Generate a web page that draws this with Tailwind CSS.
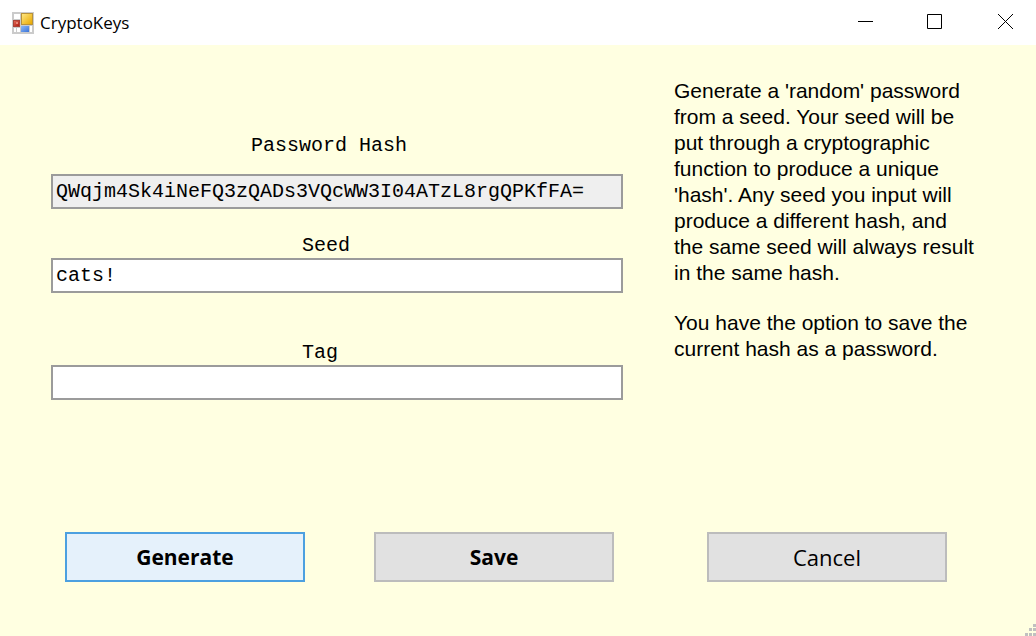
<!DOCTYPE html>
<html lang="en">
<head>
<meta charset="utf-8">
<meta name="viewport" content="width=device-width, initial-scale=1">
<title>CryptoKeys</title>
<script src="https://cdn.jsdelivr.net/npm/@tailwindcss/browser@4"></script>
</head>
<body class="relative flex min-h-screen flex-col bg-[#ffffe1] text-black">
  <header class="flex h-[45px] items-center bg-white pl-3">
    <svg class="size-[22px]" viewBox="0 0 22 22" aria-hidden="true">
      <defs>
        <linearGradient id="gold" x1="0" y1="0" x2="1" y2="1"><stop offset="0" stop-color="#ffe680"/><stop offset="1" stop-color="#e8a800"/></linearGradient>
        <linearGradient id="red" x1="0" y1="0" x2="1" y2="1"><stop offset="0" stop-color="#e06a58"/><stop offset="1" stop-color="#b01c10"/></linearGradient>
        <linearGradient id="blue" x1="0" y1="0" x2="1" y2="1"><stop offset="0" stop-color="#8ab8f8"/><stop offset="1" stop-color="#3c74d8"/></linearGradient>
      </defs>
      <rect width="22" height="22" fill="#cbcbcb"/>
      <path d="M2 2h6v5H2zM2 16h2v4H2zM5 16h3v4H5zM18 14h2v6h-2z" fill="#fff"/>
      <rect x="9" y="1" width="12" height="12" fill="#b8923a"/>
      <rect x="10" y="2" width="10" height="10" fill="url(#gold)"/>
      <rect x="1" y="8" width="7" height="7" fill="#a8443a"/>
      <rect x="2" y="9" width="5" height="5" fill="url(#red)"/>
      <rect x="4" y="10" width="2" height="2" fill="#e88878"/>
      <rect x="9" y="14" width="8" height="6" fill="url(#blue)"/>
    </svg>
    <h1 class="ml-[6px] flex-1 font-['Open_Sans','Noto_Sans',sans-serif] text-[17px] leading-6">CryptoKeys</h1>
    <div class="flex self-stretch pb-[2px]">
      <button type="button" aria-label="Minimize" class="grid w-[57px] place-items-center"><svg class="size-[15px]" viewBox="0 0 15 15" stroke="#000" fill="none"><path d="M0 7.500h15"/></svg></button>
      <button type="button" aria-label="Maximize" class="grid w-[81px] place-items-center"><svg class="size-[15px]" viewBox="0 0 15 15" stroke="#000" fill="none"><path d="M.5.5h14v14H.5z"/></svg></button>
      <button type="button" aria-label="Close" class="grid w-[61px] place-items-center"><svg class="size-[15px]" viewBox="0 0 15 15" stroke="#000" fill="none"><path d="M0 0l15 15M15 0L0 15"/></svg></button>
    </div>
  </header>

  <form class="flex flex-1 flex-col justify-between px-[51px] pb-[54px]">
    <div class="flex gap-[51px]">
      <div class="flex flex-1 flex-col pt-[89px] font-['Liberation_Mono',monospace] text-[20px] leading-6">
        <label for="hash" class="self-center pr-4">Password Hash</label>
        <input id="hash" type="text" readonly value="QWqjm4Sk4iNeFQ3zQADs3VQcWW3I04ATzL8rgQPKfFA=" class="mt-4 h-[35px] w-full border-2 border-[#9b9b9b] bg-[#efefef] px-[3px] outline-none">
        <label for="seed" class="mt-[25px] self-center pr-[22px]">Seed</label>
        <input id="seed" type="text" value="cats!" class="h-[35px] w-full border-2 border-[#9b9b9b] bg-white px-[3px] outline-none">
        <label for="tag" class="mt-12 self-center pr-[34px]">Tag</label>
        <input id="tag" type="text" class="h-[35px] w-full border-2 border-[#9b9b9b] bg-white px-[3px] outline-none">
      </div>
      <div class="w-[311px] pt-[33px] pr-1.5 font-['Liberation_Sans',sans-serif] text-[21px] leading-[26px]">
        <p>Generate a 'random' password from a seed. Your seed will be put through a cryptographic function to produce a unique 'hash'. Any seed you input will produce a different hash, and the same seed will always result in the same hash.</p>
        <p class="mt-6">You have the option to save the current hash as a password.</p>
      </div>
    </div>
    <div class="flex gap-[51px] font-['Open_Sans','Noto_Sans',sans-serif] leading-[30px]">
      <div class="flex flex-1 justify-between pl-3.5 pr-[9px]">
        <button type="submit" class="h-[50px] w-[240px] border-2 border-[#4ca0e0] bg-[#e5f1fb] text-[21px] font-bold">Generate</button>
        <button type="button" class="h-[50px] w-[240px] border-2 border-[#bcbcbc] bg-[#e1e1e1] text-[21px] font-bold">Save</button>
      </div>
      <div class="w-[311px] pl-[33px]">
        <button type="button" class="h-[50px] w-[240px] border-2 border-[#bcbcbc] bg-[#e1e1e1] text-[22px]">Cancel</button>
      </div>
    </div>
  </form>
  <svg class="absolute right-0 bottom-0 size-3" viewBox="0 0 12 12" fill="#c0c0c0" aria-hidden="true"><path d="M9 0h3v3H9zM5 4h3v3H5zM9 4h3v3H9zM1 9h3v3H1zM5 9h3v3H5zM9 9h3v3H9z"/></svg>
</body>
</html>
